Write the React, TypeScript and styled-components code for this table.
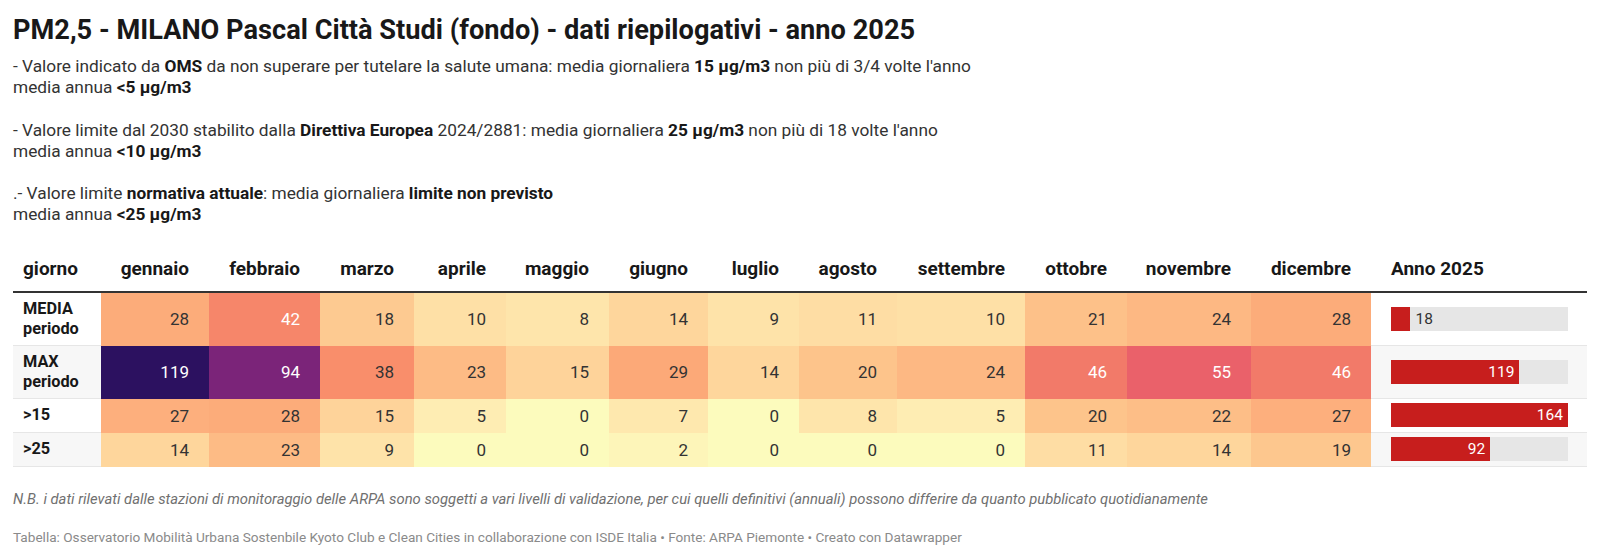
import React from 'react'
import styled, { createGlobalStyle } from 'styled-components'

const GlobalStyle = createGlobalStyle`
  html, body {
    margin: 0;
    padding: 0;
    background: #ffffff;
  }
  body {
    font-family: Roboto, "Liberation Sans", Arial, sans-serif;
    color: #181818;
  }
`

// column widths, measured from the table
const COLS = '88px 108px 111px 94px 92px 103px 99px 91px 98px 128px 102px 124px 120px 216px'

const MONTHS = [
  'gennaio', 'febbraio', 'marzo', 'aprile', 'maggio', 'giugno',
  'luglio', 'agosto', 'settembre', 'ottobre', 'novembre', 'dicembre',
]

const ROWS = [
  { label: ['MEDIA', 'periodo'], values: [28, 42, 18, 10, 8, 14, 9, 11, 10, 21, 24, 28], total: 18, tall: true },
  { label: ['MAX', 'periodo'], values: [119, 94, 38, 23, 15, 29, 14, 20, 24, 46, 55, 46], total: 119, tall: true },
  { label: ['>15'], values: [27, 28, 15, 5, 0, 7, 0, 8, 5, 20, 22, 27], total: 164, tall: false },
  { label: ['>25'], values: [14, 23, 9, 0, 0, 2, 0, 0, 0, 11, 14, 19], total: 92, tall: false },
]

const BAR_MAX = 164

// heatmap scale stops (value -> colour)
const STOPS: [number, number[]][] = [
  [0, [0xfc, 0xfb, 0xbd]],
  [5, [0xfe, 0xed, 0xb3]],
  [10, [0xfe, 0xe0, 0xa6]],
  [15, [0xfe, 0xd3, 0x9a]],
  [20, [0xfd, 0xc4, 0x8b]],
  [25, [0xfd, 0xb5, 0x81]],
  [30, [0xfc, 0xa6, 0x76]],
  [38, [0xf9, 0x8e, 0x6b]],
  [42, [0xf6, 0x86, 0x6a]],
  [46, [0xf2, 0x7a, 0x69]],
  [55, [0xea, 0x61, 0x6a]],
  [94, [0x7b, 0x24, 0x79]],
  [119, [0x2c, 0x11, 0x60]],
]

function heatColor(v: number) {
  for (let i = 1; i < STOPS.length; i++) {
    const [v1, c1] = STOPS[i]
    const [v0, c0] = STOPS[i - 1]
    if (v <= v1) {
      const t = (v - v0) / (v1 - v0)
      const c = c0.map((x, k) => Math.round(x + (c1[k] - x) * t))
      return `rgb(${c.join(',')})`
    }
  }
  const last = STOPS[STOPS.length - 1][1]
  return `rgb(${last.join(',')})`
}

const Page = styled.div`
  padding: 12px 13px 0 13px;
`

const Title = styled.h1`
  margin: 0;
  font-size: 27.2px;
  line-height: 36px;
  font-weight: 700;
  color: #181818;
`

const Description = styled.div`
  margin-top: 8px;
  font-size: 17.3px;
  line-height: 21.2px;
  color: #333333;

  b {
    font-weight: 700;
    color: #181818;
  }
`

const Para = styled.p`
  margin: 0 0 21.2px 0;

  &:last-child {
    margin-bottom: 0;
  }
`

const Table = styled.div`
  margin-top: 21px;
  width: 1574px;
`

const HeaderRow = styled.div`
  display: grid;
  grid-template-columns: ${COLS};
  border-bottom: 2px solid #333333;
  height: 44px;
  align-items: center;
`

const HeadCell = styled.div<{ $align: 'left' | 'right'; $padLeft?: number }>`
  font-size: 19px;
  font-weight: 700;
  color: #181818;
  text-align: ${({ $align }) => $align};
  padding: 0 20px 0 ${({ $padLeft }) => $padLeft ?? 10}px;
  white-space: nowrap;
`

const BodyRow = styled.div<{ $tall: boolean }>`
  display: grid;
  grid-template-columns: ${COLS};
  height: ${({ $tall }) => ($tall ? 53 : 34)}px;
`

const LabelCell = styled.div<{ $striped: boolean }>`
  display: flex;
  flex-direction: column;
  justify-content: center;
  padding: 0 0 0 10px;
  font-size: 16.3px;
  line-height: 20px;
  font-weight: 700;
  color: #181818;
  background: ${({ $striped }) => ($striped ? '#f7f7f7' : '#ffffff')};
  border-bottom: 1px solid #e6e6e6;
`

const HeatCell = styled.div<{ $dark: boolean }>`
  display: flex;
  align-items: center;
  justify-content: flex-end;
  padding-right: 20px;
  font-size: 17px;
  color: ${({ $dark }) => ($dark ? '#ffffff' : '#333333')};
`

const BarCell = styled.div<{ $striped: boolean }>`
  display: flex;
  align-items: center;
  padding: 0 19px 0 20px;
  background: ${({ $striped }) => ($striped ? '#f7f7f7' : '#ffffff')};
  border-bottom: 1px solid #e6e6e6;
`

const Track = styled.div`
  width: 100%;
  height: 24px;
  background: #e6e6e6;
  display: flex;
  align-items: center;
`

const Fill = styled.div`
  height: 100%;
  background: #c71e1d;
  display: flex;
  align-items: center;
  justify-content: flex-end;
  flex: none;
`

const BarLabel = styled.span<{ $inside: boolean }>`
  font-size: 15.5px;
  color: ${({ $inside }) => ($inside ? '#ffffff' : '#333333')};
  padding: ${({ $inside }) => ($inside ? '0 5px 0 0' : '0 0 0 5px')};
`

const Notes = styled.p`
  margin: 22px 0 0 0;
  font-size: 14.8px;
  line-height: 20px;
  font-style: italic;
  color: #707070;
`

const Footer = styled.p`
  margin: 19px 0 0 0;
  font-size: 13.6px;
  line-height: 18px;
  color: #8a8a8a;
`

function Bar({ value }: { value: number }) {
  const inside = value / BAR_MAX > 0.25
  return (
    <Track>
      <Fill style={{ width: `${(value / BAR_MAX) * 100}%` }}>
        {inside && <BarLabel $inside>{value}</BarLabel>}
      </Fill>
      {!inside && <BarLabel $inside={false}>{value}</BarLabel>}
    </Track>
  )
}

export default function App() {
  return (
    <>
      <GlobalStyle />
      <Page>
        <Title>PM2,5 - MILANO Pascal Città Studi (fondo) - dati riepilogativi - anno 2025</Title>
        <Description>
          <Para>
            - Valore indicato da <b>OMS</b> da non superare per tutelare la salute umana: media giornaliera{' '}
            <b>15 µg/m3</b> non più di 3/4 volte l'anno
            <br />
            media annua <b>&lt;5 µg/m3</b>
          </Para>
          <Para>
            - Valore limite dal 2030 stabilito dalla <b>Direttiva Europea</b> 2024/2881: media giornaliera{' '}
            <b>25 µg/m3</b> non più di 18 volte l'anno
            <br />
            media annua <b>&lt;10 µg/m3</b>
          </Para>
          <Para>
            .- Valore limite <b>normativa attuale</b>: media giornaliera <b>limite non previsto</b>
            <br />
            media annua <b>&lt;25 µg/m3</b>
          </Para>
        </Description>

        <Table>
          <HeaderRow>
            <HeadCell $align="left">giorno</HeadCell>
            {MONTHS.map(m => (
              <HeadCell key={m} $align="right">
                {m}
              </HeadCell>
            ))}
            <HeadCell $align="left" $padLeft={20}>
              Anno 2025
            </HeadCell>
          </HeaderRow>
          {ROWS.map((row, i) => (
            <BodyRow key={i} $tall={row.tall}>
              <LabelCell $striped={i % 2 === 1}>
                {row.label.map(l => (
                  <span key={l}>{l}</span>
                ))}
              </LabelCell>
              {row.values.map((v, j) => (
                <HeatCell key={j} $dark={v >= 40} style={{ background: heatColor(v) }}>
                  {v}
                </HeatCell>
              ))}
              <BarCell $striped={i % 2 === 1}>
                <Bar value={row.total} />
              </BarCell>
            </BodyRow>
          ))}
        </Table>

        <Notes>
          N.B. i dati rilevati dalle stazioni di monitoraggio delle ARPA sono soggetti a vari livelli di validazione,
          per cui quelli definitivi (annuali) possono differire da quanto pubblicato quotidianamente
        </Notes>
        <Footer>
          Tabella: Osservatorio Mobilità Urbana Sostenbile Kyoto Club e Clean Cities in collaborazione con ISDE Italia •
          Fonte: ARPA Piemonte • Creato con Datawrapper
        </Footer>
      </Page>
    </>
  )
}
